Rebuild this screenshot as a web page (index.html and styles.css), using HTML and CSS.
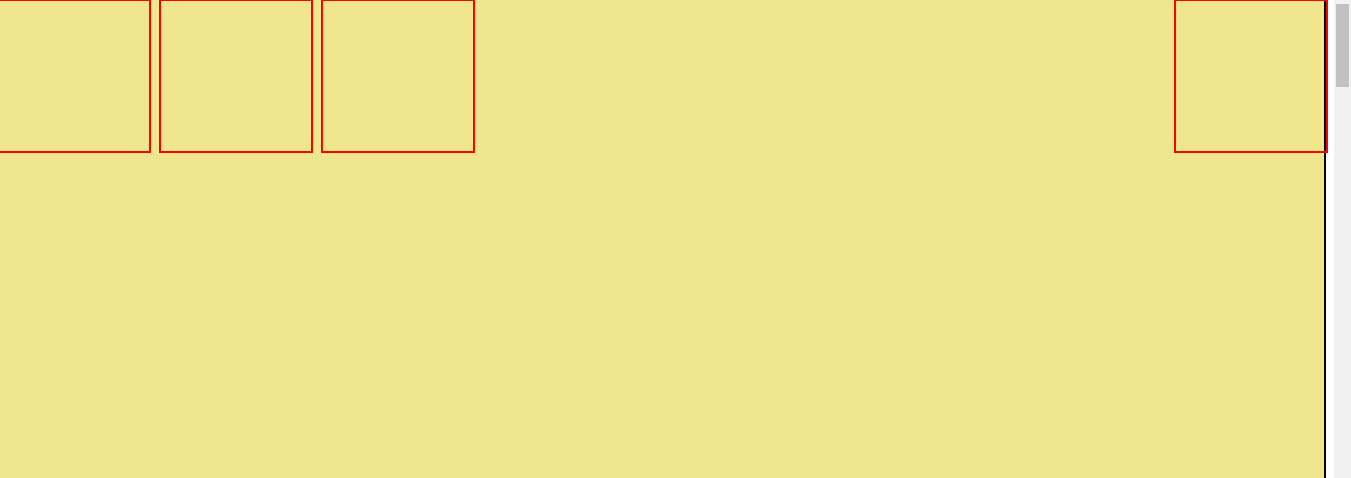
FILE: index.html
```html
<!DOCTYPE html>
<html lang="en">
<head>
<meta charset="utf-8">
<title>Boxes</title>
<link rel="stylesheet" href="styles.css">
</head>
<body>
<div class="window">
  <div class="viewport">
    <div class="page">
      <div class="row">
        <div class="box"></div>
        <div class="box"></div>
        <div class="box"></div>
        <div class="box box-end"></div>
      </div>
    </div>
  </div>
  <div class="scrollbar" aria-hidden="true">
    <div class="scrollbar-thumb"></div>
  </div>
</div>
</body>
</html>
```
FILE: styles.css
```css
html, body {
  margin: 0;
  padding: 0;
  background: #ffffff;
  overflow: hidden;
}
.window {
  display: flex;
  height: 100vh;
}
.viewport {
  flex: 1;
  min-width: 0;
  overflow: hidden;
  background: #ffffff;
}
.page {
  width: 1324px;
  height: 2510px;
  background: #f0e68c;
  border-right: 2px solid #000000;
}
.row {
  display: flex;
  gap: 8px;
  margin: -1px -4px 0 -3px;
}
.box {
  width: 150px;
  height: 150px;
  border: 2px solid #ff0000;
  flex: none;
}
.box-end {
  margin-left: auto;
}
.scrollbar {
  flex: none;
  width: 17px;
  box-sizing: border-box;
  padding: 4px 2px;
  background: #f1f1f1;
}
.scrollbar-thumb {
  height: 83px;
  background: #c1c1c1;
}
```
